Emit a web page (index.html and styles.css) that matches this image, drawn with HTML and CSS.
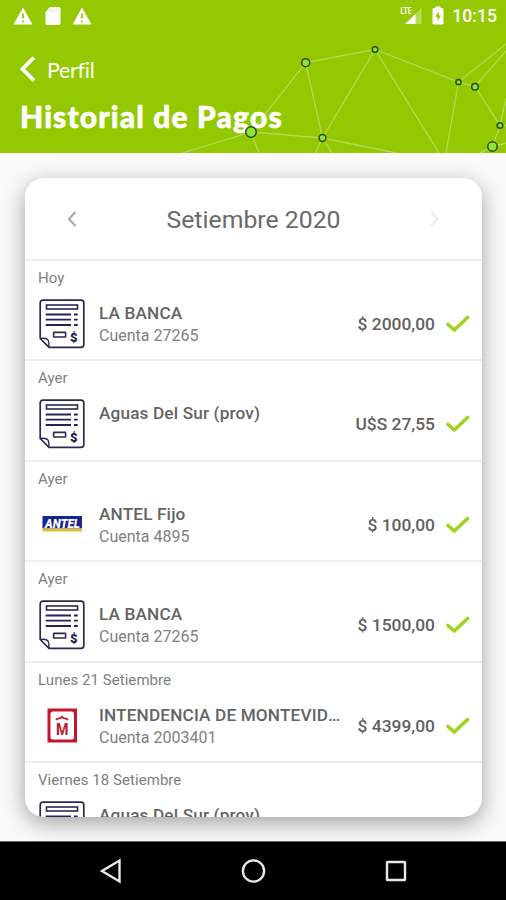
FILE: index.html
```html
<!DOCTYPE html>
<html lang="es">
<head>
    <meta charset="UTF-8">
    <meta name="viewport" content="width=device-width, initial-scale=1.0">
    <title>Historial de Pagos</title>
    <link rel="stylesheet" href="styles.css">
</head>
<body>
    <!-- Shared icons -->
    <svg class="sprite">
        <symbol id="warning" viewBox="0 0 20 18">
            <path d="M10 0.5 L19.5 17.5 H0.5 Z" fill="#fff"/>
            <path d="M10 6.5 V11.5 M10 13.5 V15.2" stroke="#94c800" stroke-width="1.8"/>
        </symbol>
        <symbol id="receipt" viewBox="0 0 46 50">
            <path d="M4 1.2 H42 Q44.8 1.2 44.8 4 V45.5 Q44.8 48.3 42 48.3 H10 L1.2 39.5 V4 Q1.2 1.2 4 1.2 Z" fill="#fff" stroke="#2c2a50" stroke-width="1.7"/>
            <path d="M1.8 39.5 Q7 38.5 9 41 Q10.5 43.5 9.8 48" fill="none" stroke="#2c2a50" stroke-width="1.4"/>
            <rect x="7.5" y="6" width="31" height="4" fill="#fff" stroke="#2c2a50" stroke-width="1.6"/>
            <path d="M6.7 15.5 H32 M35 15.5 H38.7 M6.7 20.7 H32 M35 20.7 H38.7 M6.7 26 H32 M35 26 H38.7" stroke="#26215a" stroke-width="1.8"/>
            <rect x="14.6" y="33.4" width="12" height="4.6" rx="0.6" fill="none" stroke="#2c2a50" stroke-width="1.6"/>
            <text x="31" y="42.8" class="receipt-sign">$</text>
        </symbol>
        <symbol id="check" viewBox="0 0 24 18">
            <path d="M2 9.5 L8.3 15 L21.5 2.5" fill="none" stroke="#9fd41c" stroke-width="3.6" stroke-linecap="round" stroke-linejoin="round"/>
        </symbol>
    </svg>

    <div class="screen">
        <header class="header">
            <!-- Network decoration: lines go under the title, dots over it -->
            <svg class="network" width="506" height="153" viewBox="0 0 506 153">
                <path d="M182 153 L251 132 L305.700 62.700 L375 49.500 L458.500 82 L506 44 M305.700 62.700 L322.500 138 L375 49.500 L439 153 M458.500 82 L475 86.500 L506 51 M475 86.500 L500 125.500 L506 98 M458.500 82 L446 153 M251 132 L322.500 138 L396 153 M251 132 L259 153 M322.500 138 L315 153 M322.500 138 L332 153 M500 125.500 L492.500 146.500 L480 153 M492.500 146.500 L506 143 M500 125.500 H506"/>
            </svg>

            <div class="status-bar">
                <svg class="status-warning" width="20" height="18"><use href="#warning"/></svg>
                <svg class="status-card" width="16" height="18" viewBox="0 0 16 18">
                    <path d="M5 0 H14 Q15.500 0 15.500 1.500 V16.500 Q15.500 18 14 18 H2 Q0.500 18 0.500 16.500 V5 Z" fill="#fff"/>
                    <path d="M6 2.500 V4.500 M9 2.500 V4.500 M12 2.500 V4.500" stroke="#c9e38a" stroke-width="1.200"/>
                </svg>
                <svg class="status-warning" width="20" height="18"><use href="#warning"/></svg>
                <svg class="status-signal" width="22" height="19" viewBox="0 0 22 19">
                    <path d="M21.500 2 V18 H5 Z" fill="#b9db5c"/>
                    <path d="M15.500 8 V18 H5 Z" fill="#fff"/>
                    <text x="0.500" y="8" textLength="11" lengthAdjust="spacingAndGlyphs" class="lte">LTE</text>
                </svg>
                <svg class="status-battery" width="12" height="19" viewBox="0 0 12 19">
                    <path d="M3.500 0.500 H8.500 V2.300 H10.500 Q11.500 2.300 11.500 3.300 V17.500 Q11.500 18.500 10.500 18.500 H1.500 Q0.500 18.500 0.500 17.500 V3.300 Q0.500 2.300 1.500 2.300 H3.500 Z" fill="#fff"/>
                    <path d="M7 5.500 L3.200 11 H5.500 V15 L9 9.500 H7 Z" fill="#94c800"/>
                </svg>
                <span class="time">10:15</span>
            </div>

            <div class="back">
                <svg width="16" height="26" viewBox="0 0 16 26">
                    <path d="M14 1.500 L2.500 13 L14 24.500" fill="none" stroke="#fff" stroke-width="3.800"/>
                </svg>
                <span>Perfil</span>
            </div>
            <h1>Historial de Pagos</h1>

            <svg class="network" width="506" height="153" viewBox="0 0 506 153">
                <circle cx="251" cy="132" r="5.300"/>
                <circle cx="305.700" cy="62.700" r="4"/>
                <circle cx="375" cy="49.500" r="2.800"/>
                <circle cx="322.500" cy="138" r="3.400"/>
                <circle cx="458.500" cy="82" r="2.600"/>
                <circle cx="475" cy="86.700" r="3.300"/>
                <circle cx="500" cy="125.500" r="2.800"/>
                <circle cx="492.500" cy="146.500" r="4.700"/>
            </svg>
        </header>

        <main class="content">
            <div class="card">
                <div class="month">
                    <svg width="10" height="16" viewBox="0 0 10 16">
                        <path d="M8.500 1 L2 8 L8.500 15" fill="none" stroke="#aaa" stroke-width="2.200"/>
                    </svg>
                    <h2>Setiembre 2020</h2>
                    <svg width="10" height="16" viewBox="0 0 10 16">
                        <path d="M1.500 1.500 L7.500 8 L1.500 14.500" fill="none" stroke="#ebebeb" stroke-width="2"/>
                    </svg>
                </div>

                <!-- Payments -->
                <div class="payment">
                    <p class="date">Hoy</p>
                    <div class="row">
                        <svg class="icon" width="46" height="50"><use href="#receipt"/></svg>
                        <div class="info">
                            <h3>LA BANCA</h3>
                            <p>Cuenta 27265</p>
                        </div>
                        <span class="amount">$ 2000,00</span>
                        <svg class="check" width="24" height="18"><use href="#check"/></svg>
                    </div>
                </div>

                <div class="payment">
                    <p class="date">Ayer</p>
                    <div class="row">
                        <svg class="icon" width="46" height="50"><use href="#receipt"/></svg>
                        <div class="info">
                            <h3>Aguas Del Sur (prov)</h3>
                        </div>
                        <span class="amount">U$S 27,55</span>
                        <svg class="check" width="24" height="18"><use href="#check"/></svg>
                    </div>
                </div>

                <div class="payment">
                    <p class="date">Ayer</p>
                    <div class="row">
                        <svg class="icon" width="46" height="50" viewBox="0 0 46 50">
                            <rect x="3.500" y="16" width="39.500" height="12.500" fill="#15278c"/>
                            <rect x="3.500" y="28.500" width="39.500" height="3" fill="#e3bd35"/>
                            <text x="6" y="27.500" textLength="35" lengthAdjust="spacingAndGlyphs" class="antel">ANTEL</text>
                        </svg>
                        <div class="info">
                            <h3>ANTEL Fijo</h3>
                            <p>Cuenta 4895</p>
                        </div>
                        <span class="amount">$ 100,00</span>
                        <svg class="check" width="24" height="18"><use href="#check"/></svg>
                    </div>
                </div>

                <div class="payment">
                    <p class="date">Ayer</p>
                    <div class="row">
                        <svg class="icon" width="46" height="50"><use href="#receipt"/></svg>
                        <div class="info">
                            <h3>LA BANCA</h3>
                            <p>Cuenta 27265</p>
                        </div>
                        <span class="amount">$ 1500,00</span>
                        <svg class="check" width="24" height="18"><use href="#check"/></svg>
                    </div>
                </div>

                <div class="payment">
                    <p class="date">Lunes 21 Setiembre</p>
                    <div class="row">
                        <svg class="icon" width="46" height="50" viewBox="0 0 46 50">
                            <rect x="8.500" y="7.500" width="29.500" height="34" fill="#c4162e"/>
                            <rect x="11.500" y="10.500" width="23.500" height="28" rx="2.500" fill="#fff"/>
                            <path d="M17 19 Q18 17.300 20.500 17.300 Q22 17.300 23 15.800 Q24 17.300 25.500 17.300 Q28 17.300 29 19" fill="none" stroke="#c4162e" stroke-width="1.700"/>
                            <text x="17" y="34" textLength="12.500" lengthAdjust="spacingAndGlyphs" class="im">M</text>
                        </svg>
                        <div class="info">
                            <h3>INTENDENCIA DE MONTEVIDEO</h3>
                            <p>Cuenta 2003401</p>
                        </div>
                        <span class="amount">$ 4399,00</span>
                        <svg class="check" width="24" height="18"><use href="#check"/></svg>
                    </div>
                </div>

                <div class="payment">
                    <p class="date">Viernes 18 Setiembre</p>
                    <div class="row">
                        <svg class="icon" width="46" height="50"><use href="#receipt"/></svg>
                        <div class="info">
                            <h3>Aguas Del Sur (prov)</h3>
                        </div>
                    </div>
                </div>
            </div>
        </main>

        <nav class="nav-bar">
            <svg width="26" height="26" viewBox="0 0 26 26"><path d="M22.500 2.500 V23.500 L5 13 Z"/></svg>
            <svg width="26" height="26" viewBox="0 0 26 26"><circle cx="13.500" cy="13" r="10.600"/></svg>
            <svg width="26" height="26" viewBox="0 0 26 26"><rect x="4" y="4" width="18" height="18" rx="0.500"/></svg>
        </nav>
    </div>
</body>
</html>
```
FILE: styles.css
```css
* {
    box-sizing: border-box;
    margin: 0;
    padding: 0;
}

body {
    font-family: Roboto, sans-serif;
    background-color: #000;
}

svg {
    display: block;
    flex-shrink: 0;
}

.sprite {
    display: none;
}

.screen {
    width: 506px;
    height: 900px;
    display: flex;
    flex-direction: column;
    overflow: hidden;
}

/* Header */
.header {
    position: relative;
    height: 153px;
    background-color: #94c800;
    color: #fff;
}

.network {
    position: absolute;
    top: 0;
    left: 0;
}

.network path {
    fill: none;
    stroke: #b4da58;
    stroke-width: 1.3;
}

.network circle {
    fill: #8be63c;
    stroke: #2f4a0c;
    stroke-width: 1.5;
}

.status-bar {
    height: 31px;
    padding: 0 9px 0 12.5px;
    display: flex;
    align-items: center;
}

.status-card {
    margin: 0 11.5px 0 12px;
}

.status-signal {
    margin-left: auto;
}

.status-battery {
    margin: 0 8px 0 10px;
}

.time {
    padding-top: 1px;
    font-size: 17.6px;
    font-weight: 500;
    line-height: 31px;
}

.lte {
    font: 700 9.5px Roboto, sans-serif;
    fill: #fff;
}

.back {
    height: 26px;
    margin: 25px 0 0 20px;
    display: flex;
    align-items: center;
    gap: 11px;
    font-family: Lato, sans-serif;
    font-size: 21.5px;
    letter-spacing: -0.3px;
}

.back span {
    padding-top: 2px;
}

h1 {
    position: relative;
    margin: 17px 0 0 20px;
    font-family: Lato, sans-serif;
    font-size: 30px;
    font-weight: 900;
    line-height: 34px;
    letter-spacing: 1.15px;
    -webkit-text-stroke: 0.6px #fff;
}

/* Card */
.content {
    flex: 1;
    min-height: 0;
    padding: 25px 24px 25px 25px;
    background-color: #fafafa;
}

.card {
    height: 639px;
    border-radius: 19px;
    background-color: #fff;
    box-shadow: 0 6px 22px rgba(0, 0, 0, 0.36);
    overflow: hidden;
}

.month {
    height: 81px;
    padding: 0 42px;
    display: flex;
    align-items: center;
    justify-content: space-between;
}

h2 {
    font-size: 24.8px;
    font-weight: 400;
    line-height: 30px;
    color: #6a6a6a;
    padding-top: 3px;
}

/* Payment rows */
.payment {
    height: 100.4px;
    padding: 7px 12px 0 14px;
    border-top: 2px solid #eee;
}

.date {
    margin-left: -1px;
    font-size: 15px;
    line-height: 20px;
    color: #808080;
    letter-spacing: 0.05px;
}

.row {
    height: 50px;
    margin-top: 11px;
    display: flex;
    align-items: center;
}

.info {
    flex: 1;
    min-width: 0;
    height: 50px;
    margin-left: 14px;
    padding-top: 3px;
}

h3 {
    font-size: 17.2px;
    font-weight: 500;
    line-height: 23px;
    letter-spacing: 0.15px;
    color: #646464;
    white-space: nowrap;
    overflow: hidden;
    text-overflow: ellipsis;
}

.info p {
    font-size: 16px;
    line-height: 22px;
    color: #808080;
}

.amount {
    margin-left: 14px;
    font-size: 17.4px;
    font-weight: 500;
    color: #606060;
}

.check {
    margin-left: 11px;
}

.receipt-sign {
    font: 900 13px Roboto, sans-serif;
    fill: #1d1a4c;
}

.antel {
    font: italic 900 12px Roboto, sans-serif;
    fill: #fff;
}

.im {
    font: 700 16px Roboto, sans-serif;
    fill: #c4162e;
}

/* Android navigation */
.nav-bar {
    height: 59px;
    padding: 0 97px;
    display: flex;
    align-items: center;
    justify-content: space-between;
    background-color: #000;
    border-top: 1px solid #666;
}

.nav-bar svg {
    fill: none;
    stroke: #e8e8e8;
    stroke-width: 2.4;
}
```
